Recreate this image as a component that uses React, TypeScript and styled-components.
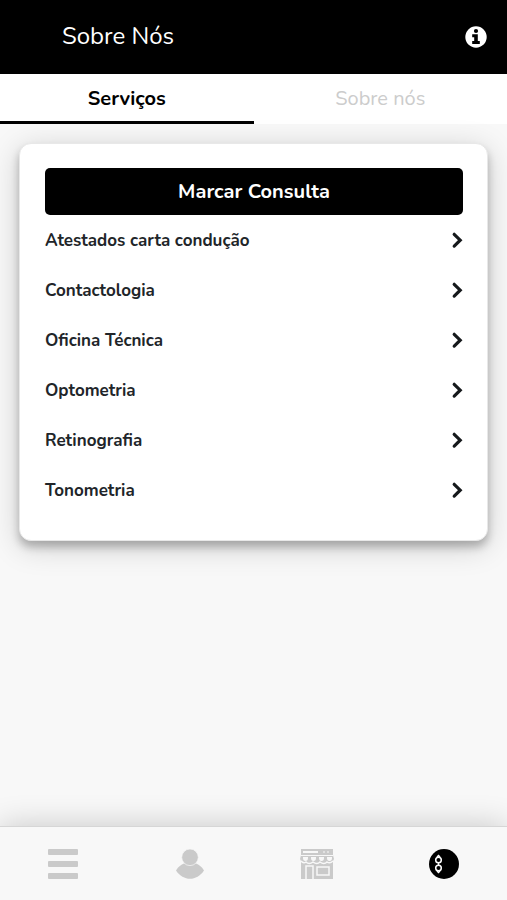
import React, { useState } from "react";
import styled, { createGlobalStyle } from "styled-components";

const GlobalStyle = createGlobalStyle`
  *, *::before, *::after { box-sizing: border-box; }
  body {
    margin: 0;
    background: #f8f8f8;
    font-family: Nunito, Lato, "Open Sans", sans-serif;
    color: #212529;
  }
  button { font: inherit; color: inherit; border: 0; background: none; padding: 0; cursor: pointer; }
`;

const Page = styled.div`
  min-height: 100vh;
  display: flex;
  flex-direction: column;
`;

const Header = styled.header`
  height: 74px;
  padding: 0 20px 1px 62px;
  display: flex;
  align-items: center;
  justify-content: space-between;
  background: #000;
  color: #fff;
`;

const Title = styled.h1`
  margin: 0;
  font-size: 24px;
  line-height: 33px;
  font-weight: 400;
`;

const InfoButton = styled.button`
  display: flex;
`;

const Tabs = styled.div`
  display: grid;
  grid-template-columns: 1fr 1fr;
  background: #fff;
`;

const Tab = styled.button<{ $active: boolean }>`
  height: 50px;
  padding-top: 2px;
  border-bottom: 3px solid ${(p) => (p.$active ? "#000" : "#fff")};
  color: ${(p) => (p.$active ? "#000" : "#ccc")};
  font-size: 20px;
  line-height: 24px;
  font-weight: ${(p) => (p.$active ? 700 : 400)};
`;

const Main = styled.main`
  flex: 1;
  padding: 19px;
`;

const Card = styled.section`
  padding: 24px 24px 25px 25px;
  border: 1px solid #e8e8e8;
  border-radius: 12px;
  background: #fff;
  box-shadow: 0 6px 8px rgba(0, 0, 0, 0.24), 0 6px 30px rgba(0, 0, 0, 0.18);
`;

const BookButton = styled.button`
  display: block;
  width: 100%;
  height: 47px;
  border-radius: 5px;
  background: #000;
  color: #fff;
  font-size: 20px;
  line-height: 24px;
  font-weight: 700;
`;

const ServiceList = styled.ul`
  margin: 0;
  padding: 0;
  list-style: none;
`;

const ServiceButton = styled.button`
  width: 100%;
  height: 50px;
  padding-top: 2px;
  display: flex;
  align-items: center;
  justify-content: space-between;
  font-size: 17px;
  line-height: 24px;
  font-weight: 700;
  text-align: left;
`;

const BottomNav = styled.nav`
  height: 74px;
  display: grid;
  grid-template-columns: repeat(4, 1fr);
  border-top: 1px solid #d6d6d6;
  background: #f8f8f8;
  box-shadow: 0 0 32px rgba(0, 0, 0, 0.2);
`;

const NavButton = styled.button`
  display: flex;
  align-items: center;
  justify-content: center;
`;

const services = [
  "Atestados carta condução",
  "Contactologia",
  "Oficina Técnica",
  "Optometria",
  "Retinografia",
  "Tonometria",
];

const InfoIcon = () => (
  <svg width="22" height="22" viewBox="0 0 22 22" aria-hidden="true">
    <circle cx="11" cy="11" r="10.7" fill="#fff" />
    <circle cx="11" cy="5" r="2.1" fill="#000" />
    <path d="M7.200 8.300h5.600v6.800h2V18H7.200v-2.900h2v-3.900h-2z" fill="#000" />
  </svg>
);

const Chevron = () => (
  <svg width="12" height="18" viewBox="0 0 12 18" fill="none" stroke="#16191c" strokeWidth="3.2" aria-hidden="true">
    <path d="M3.200 2.300l6 5.900-6 5.900" strokeLinecap="round" strokeLinejoin="miter" />
  </svg>
);

const MenuIcon = () => (
  <svg width="30" height="30" viewBox="0 0 30 30" fill="#cacaca" aria-hidden="true">
    <rect width="30" height="6" rx="1" />
    <rect y="12" width="30" height="6" rx="1" />
    <rect y="24" width="30" height="6" rx="1" />
  </svg>
);

const UserIcon = () => (
  <svg width="30" height="30" viewBox="0 0 30 30" fill="#cacaca" aria-hidden="true">
    <path d="M1 21.500C3.500 17.500 6 15.500 9 14.500h12c3 1 5.500 3 8 7C25.500 27 20 29.800 15 29.800S4.500 27 1 21.500z" />
    <circle cx="15" cy="8.300" r="8.300" stroke="#f8f8f8" strokeWidth="0.7" />
  </svg>
);

const StoreIcon = () => (
  <svg width="34" height="30" viewBox="0 0 34 30" aria-hidden="true">
    <path fill="#cacaca" d="M1 0h32v6l1 4-1 2v18H1V12l-1-2 1-4z" />
    <path fill="#f8f8f8" d="M3 2h15v2H3zM1 6h32v1H1zM3 8h5v1a2.500 3 0 0 1-5 0zM11 8h5v1a2.500 3 0 0 1-5 0zM19 8h5v1a2.500 3 0 0 1-5 0zM27 8h5v1a2.500 3 0 0 1-5 0z" />
    <path fill="none" stroke="#f8f8f8" strokeWidth="1.500" d="M1 12q2.500 3 5 1q3 3 7 0q4 3 7 0q4 3 7 0q3 2 6-1M6 30V17h7v13M17 18h12v8H17z" />
    <path fill="none" stroke="#f8f8f8" d="M24 2v2M28 2v2" />
  </svg>
);

const GlassesIcon = () => (
  <svg width="30" height="30" viewBox="0 0 30 30" aria-hidden="true">
    <circle cx="15" cy="15" r="15" fill="#000" />
    <g fill="none" stroke="#fff" strokeWidth="1.500">
      <circle cx="9.500" cy="11" r="2.800" />
      <circle cx="9.500" cy="19" r="2.800" />
      <path d="M8 8l1.500-1.500L11 8M9.500 14v2M8 22l1.500 1.500L11 22" />
    </g>
  </svg>
);

const navItems = [
  { label: "Menu", icon: <MenuIcon /> },
  { label: "Perfil", icon: <UserIcon /> },
  { label: "Loja", icon: <StoreIcon /> },
  { label: "Ótica", icon: <GlassesIcon /> },
];

export default function App() {
  const [active, setActive] = useState(0);
  return (
    <>
      <GlobalStyle />
      <Page>
        <Header>
          <Title>Sobre Nós</Title>
          <InfoButton aria-label="Informações"><InfoIcon /></InfoButton>
        </Header>
        <Tabs role="tablist">
          {["Serviços", "Sobre nós"].map((label, i) => (
            <Tab key={label} role="tab" aria-selected={active === i} $active={active === i} onClick={() => setActive(i)}>
              {label}
            </Tab>
          ))}
        </Tabs>
        <Main>
          <Card>
            <BookButton>Marcar Consulta</BookButton>
            <ServiceList>
              {services.map((name) => (
                <li key={name}>
                  <ServiceButton>{name}<Chevron /></ServiceButton>
                </li>
              ))}
            </ServiceList>
          </Card>
        </Main>
        <BottomNav>
          {navItems.map((item) => (
            <NavButton key={item.label} aria-label={item.label}>{item.icon}</NavButton>
          ))}
        </BottomNav>
      </Page>
    </>
  );
}
